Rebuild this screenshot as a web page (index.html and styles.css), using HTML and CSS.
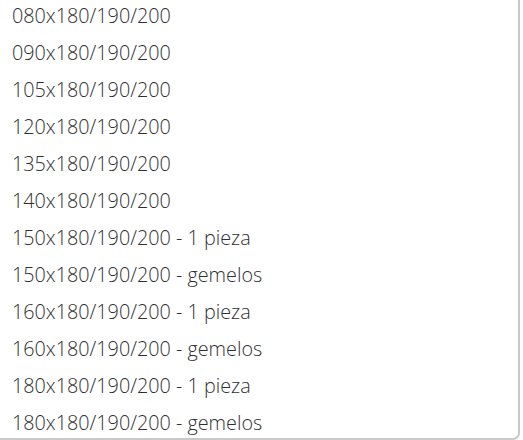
FILE: index.html
```html
<!DOCTYPE html>
<html lang="es">
<head>
    <meta charset="UTF-8">
    <meta name="viewport" content="width=device-width, initial-scale=1.0">
    <title>Medidas</title>
    <link rel="stylesheet" href="styles.css">
</head>
<body>
    <div class="dropdown">
        <ul class="options">
            <li>080x180/190/200</li>
            <li>090x180/190/200</li>
            <li>105x180/190/200</li>
            <li>120x180/190/200</li>
            <li>135x180/190/200</li>
            <li>140x180/190/200</li>
            <li>150x180/190/200 - 1 pieza</li>
            <li>150x180/190/200 - gemelos</li>
            <li>160x180/190/200 - 1 pieza</li>
            <li>160x180/190/200 - gemelos</li>
            <li>180x180/190/200 - 1 pieza</li>
            <li>180x180/190/200 - gemelos</li>
        </ul>
    </div>
</body>
</html>
```
FILE: styles.css
```css
body {
    margin: 0;
    background: #fff;
    overflow: hidden;
    font-family: 'Open Sans', 'Lato', sans-serif;
    color: #2f2f2f;
}

.dropdown {
    box-sizing: border-box;
    width: 530px;
    height: 450px;
    margin: -10px 0 0 -10px;
    padding: 5px 0 0 20px;
    border: 2px solid #c9c9c9;
    border-radius: 7px;
    background: #fff;
}

.options {
    list-style: none;
    margin: 0;
    padding: 0;
}

.options li {
    font-size: 19.8px;
    font-weight: 350;
    line-height: 37px;
    height: 37px;
    white-space: nowrap;
}
```
